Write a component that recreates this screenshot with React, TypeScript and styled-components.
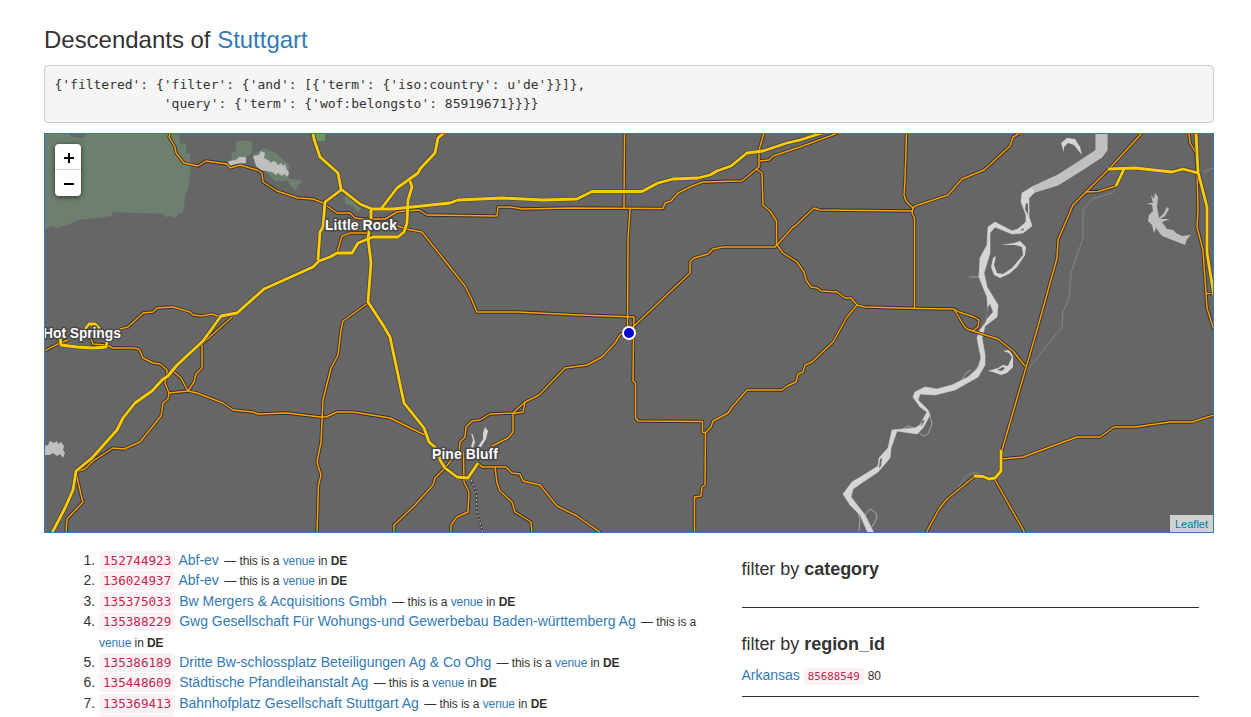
import React from 'react';
import styled, { createGlobalStyle } from 'styled-components';

const GlobalStyle = createGlobalStyle`
  * { box-sizing: border-box; }
  html, body { height: 100%; overflow: hidden; }
  body {
    margin: 0;
    background: #fff;
    color: #333;
    font-family: 'Liberation Sans', Arial, sans-serif;
    font-size: 14px;
    line-height: 20px;
  }
`;

const Page = styled.main`
  width: 1170px;
  margin: 0 0 0 44px;
  padding-top: 26px;
`;

const Title = styled.h3`
  margin: 0 0 12px;
  font-size: 24px;
  font-weight: 400;
  line-height: 27px;
  letter-spacing: -0.02px;
`;

const Link = styled.a`
  color: #337ab7;
  text-decoration: none;
`;

const Query = styled.pre`
  margin: 0 0 10px;
  padding: 9px 9.5px;
  height: 58px;
  border: 1px solid #ccc;
  border-radius: 4px;
  background: #f5f5f5;
  font: 13px/19px 'DejaVu Sans Mono', monospace;
  letter-spacing: -0.02px;
`;

const MapFrame = styled.section`
  position: relative;
  height: 400px;
  border: 1px solid #337ab7;
  background: #666;
  overflow: hidden;
`;

const MapArt = styled.svg`
  display: block;
  width: 1168px;
  height: 398px;
`;

const Label = styled.text`
  font: bold 14px 'Liberation Sans', Arial, sans-serif;
  fill: #fff;
  stroke: #484848;
  stroke-width: 3px;
  stroke-linejoin: round;
  paint-order: stroke;
`;

const ZoomControl = styled.div`
  position: absolute;
  top: 10px;
  left: 10px;
  width: 26px;
  border-radius: 4px;
  background: #fff;
  box-shadow: 0 1px 5px rgba(0, 0, 0, 0.65);
`;

const ZoomButton = styled.button`
  display: flex;
  align-items: center;
  justify-content: center;
  width: 26px;
  height: 26px;
  padding: 1px 0 0 1px;
  border: 0;
  background: none;
  color: #000;
  &:first-child { border-bottom: 1px solid #ccc; padding-top: 3px; }
`;

const Attribution = styled.div`
  position: absolute;
  right: 0;
  bottom: 0;
  padding: 0 5px;
  height: 17px;
  background: rgba(255, 255, 255, 0.7);
  color: #0078a8;
  font-size: 11px;
  line-height: 18px;
`;

const Columns = styled.div`
  display: grid;
  grid-template-columns: 682.5px 487.5px;
`;

const ResultsColumn = styled.div`
  padding: 17px 15px 0;
`;

const Results = styled.ol`
  margin: 0;
  padding-left: 40px;
`;

const Result = styled.li`
  line-height: 20.4px;
`;

const Code = styled.code<{ $small?: boolean }>`
  padding: 2px 4px;
  border-radius: 4px;
  background: #f9f2f4;
  color: #c7254e;
  font-family: 'DejaVu Sans Mono', monospace;
  font-size: ${(p) => (p.$small ? '10.8px' : '12.6px')};
  line-height: 1;
`;

const Note = styled.small<{ $count?: boolean }>`
  margin-left: ${(p) => (p.$count ? 0 : '1.5px')};
  font-size: 12px;
  letter-spacing: ${(p) => (p.$count ? 0 : '-0.08px')};
  line-height: 1;
`;

const Filters = styled.aside`
  padding: 0 15px;
`;

const Filter = styled.section<{ $height: number }>`
  height: ${(p) => p.$height}px;
  border-bottom: 1px solid #333;
`;

const FilterTitle = styled.h4`
  margin: 0;
  padding-top: 26px;
  font-size: 18px;
  font-weight: 400;
  line-height: 20px;
  letter-spacing: -0.03px;
`;

const FilterItem = styled.div`
  margin-top: 11px;
`;

const minorRoads = [
  'M170 133L169 137L175 147L176 153L184 163L198 166L206 161L227 164L230 168L240 165L257 170L262 173L263 182L277 191L298 198L313 199L323 203L337 213L350 213L355 218L362 219L385 219L397 212L406 211L419 210L427 215L497 216L498 207L510 207L523 209L570 208L663 208.5L665 203L671 201L678 193L692 186L703 182L742 181L759 167L759 150L764 133',
  'M760 161L769 160L773 156L800 147L838 133',
  'M756 169L762 173L763 205L770 211L776.5 221L776.5 245L775 247L723 247L713 249L708 254L694 258L690 262L690 273L634 326L620 335L615 343L602 357L587 365L565 368L539 395L525 402L513 413L490 414L480 420L472 421L466 427L465 437L460 442L459 452',
  'M525 402L523 412L513 413.5L513 432L508 438L492 446',
  'M777 245L793 227L795 226L814 208L820 210L913 211',
  'M906.5 133L905 180L904 195L906 201L913 208L912 213L914.5 218L914.5 308',
  'M913 208L915 206L948 195L962 179L984 170L1010 146L1013 137L1020 133',
  'M777 245L783 253L797 262L804 272L806 280L811 287L817 288L821 291L837 292L845 298L851 298L857 305L865 307L920 308.5L954 309L959 312L974 317L979 320L978 327L973 331L967 329L964 326L954 309',
  'M973 331L982 334L998 339L1013 351L1025 366',
  'M857 305L847 317L842 326L833 342L812 362L805 365L803 372L798 374L796 382L787 386L782 390L747 390L732 407L728 413L713 421L711 427L705.5 432.5L702.5 432.5L702.5 421.5L638 421L635.5 418L635.5 383L633 381L633.5 338L634 317L607 316L580 315L517 312L477 312L471 298L465 286L422 232L406 229L398 226',
  'M705.5 432L705 485L702 487L701 496L694.5 497L694.5 533',
  'M624.5 133L624 208', 'M630 209L628 240L627.5 327',
  'M1142 133L1110 168L1073 205L1058 240L1057 258L1037 330L1002 450',
  'M974 477L947 499L939 509L926 533', 'M995 480L1025 533',
  'M1002 459L1023 457L1077 437L1100 437L1114 427L1135 427L1170 422L1192 422L1214 415',
  'M1116 186L1098 191.5L1085 192',
  'M1189 133L1190 143L1196 153L1197 172L1198 210L1197 227L1203 250L1206 293L1207 308L1214 330',
  'M1206 293.5L1214 293.5', 'M337 253L342 236L350 233L368 233',
  'M368 303L343 321L341 330L338 355L331 368L323 400L321 442L317 462L321 475L318.5 485L317 533',
  'M120 329L128 327L143 313L153 312L157 308L173 307L190 312L193 315L202 316L212 314L220 317',
  'M232 317L223 325L202 344L202 368L196 374L194 382L188 391L169 393L165 383L167 375L167 370L160 364L153 363L143 358L139 349L133 348L113 348L107 345L93 344L90 337',
  'M173 371L181 378L188 391L197 393L223 403L233 410L253 412L258 414L287 413L320 417L326 417L337 412L353 412L390 418L427 436',
  'M169 393L168 399L163 403L161 416L140 442L124 449L113 448L93 461L85 469L76 472L81 495L83 502L67 519L66 533',
  'M44 351L60 343L68 340',
  'M453 458L445 468L435 478L433 485L415 505L394 525L394 533',
  'M463.5 452L464 482L469 492L468 512L457 517L451 525L451 533',
  'M478 463L482 467L506 467L512 473L520 474L523 481L540 485L557 506L577 516L601 533',
  'M495 467L497 483L500 491L512 502L515 512L531 522L532 533',
];

const highways = [
  'M313 133L314 139L320 157L338 173L341 189L360 204L372 209L393 209L450 203L458 200L503 198L543 200L577 199L592 191.5L642 191.5L658 183L673 179L698 178L710 175L717 171L731 166L747 153L763 151L787 143L800 140L822 133',
  'M444 133L438 138L435 153L420 169L418 173L397 188L381 209',
  'M410 181L412 187L408 200L407 223L404 232L398 237L373 237L358 243L352 253L337 253L330 257L319 261L313 267L264 289L237 313L221 316L211 330L203 341L177 365L168 376L162 380L152 391L135 403L123 418L117 430L92 458L76 471L73 490L65 508L52 533',
  'M341 190L325 202L323 227L320 232L318 260',
  'M371 210L371 218L368 238L371 263L368 302L383 325L390 337L404 403L424 428L429 442L438 450L440 460L445 468L457 477L468 478L478 463',
  'M1001 450L1001 471L995 478L989 479L983 476.5L974 476',
  'M1108 169L1135 168L1172 172L1183 169L1198 173', 'M1124 169L1116 186',
  'M1196 133L1198 172L1207 207L1207 253L1214 296',
  'M60 337L61 345L77 347L93 348L106 347L107 342', 'M85 329L89 324L95 324L100 329',
];

const river =
  'M1096 133L1096 150L1088 157L1058 175L1032 187L1022 193L1021 202L1026 215L1026 222L1018 229L1012 231L995 222L988 227L987 245L980 258L979 277L987 297L988 310L986 322L980 330L977 338L981 358L978 368L968 377L952 385L937 389L925 387L915 392L913 397L920 407L927 412L920 425L915 428L892 430L888 448L879 458L878 466L867 473L852 482L843 494L850 505L860 515L868 533L874 533L865 515L851 497L853 489L863 482L878 472L890 458L891 448L897 431L917 434L923 428L930 415L928 410L918 400L920 394L935 395L955 390L978 377L985 365L985 355L982 338L985 326L997 317L998 305L987 287L984 273L990 253L990 233L995 227L1012 234L1023 233L1032 226L1029 217L1029 198L1035 192L1058 185L1082 170L1102 157L1107 150L1107 133Z';

const reservoirs = [
  'M229 161L236 160L239 157L246 157L246 163L236 164L229 166L225 166Z',
  'M253 156L259 155L261 151L265 153L264 158L268 160L271 163L273 161L276 162L278 165L281 163L283 166L285 164L287 170L289 172L288 177L284 174L282 176L278 173L276 175L272 172L266 171L261 170L256 166Z',
  'M44 446L48 445L50 441L54 443L57 441L58 444L61 442L64 446L63 450L65 453L63 458L60 454L57 456L53 453L50 455L44 455Z',
  'M1150 203L1153 203L1151 195L1154 199L1155 193L1158 197L1157 207L1159 218L1164 213L1167 207L1169 209L1165 216L1160 219L1170 219L1162 222L1167 229L1173 230L1176 233L1182 236L1191 235L1187 239L1185 245L1175 241L1162 236L1156 228L1154 233L1152 225L1148 221L1149 215L1153 211L1152 205L1147 203Z',
];

const parks = [
  'M44 133L68 133L72 137L84 138L86 133L179 133L180 143L186 144L186 153L190 154L191 170L188 190L186 191L183 213L178 214L178 216L173 218L172 216L165 217L164 214L113 212L112 216L96 218L77 220L68 225L59 227L57 228L51 226L44 231Z',
  'M236 141L252 141L252 153L246 158L236 161L231 166L232 152L236 151Z',
  'M264 148L276 153L290 166L287 178L304 181L298 185L296 190L290 186L288 181L275 181L269 175L253 155Z',
  'M345 195L354 198L357 206L361 208L358 212L353 206L345 204Z',
];

const oxbows =
  'M1061 143L1067 138L1075 139L1080 147L1082 155L1074 145L1068 143L1064 147L1064 152ZM1001 245L1014 243L1020 241L1026 247L1025 255L1017 267L1009 274L1000 278L994 275L991 267L993 258L996 256L994 265L997 273L1003 274L1012 268L1023 255L1022 247L1015 245ZM988 371L998 368L1003 365L1008 366L1012 357L1009 353L1003 351L1009 350L1013 356L1013 367L1007 373L1001 375L993 372ZM471 433L473 435L475 442L473 448L471 447L473 440ZM485 427L488 431L486 439L481 447L477 448L483 439L483 433Z';

const MapView = () => (
  <MapArt viewBox="45 134 1168 398" strokeLinejoin="round" fill="none">
    <g fill="#6d806f">{parks.map((d) => <path key={d} d={d} />)}</g>
    <path fill="#6a9768" d="M315 133h10v8h-8z" />
    <g fill="#bfbfbf">{reservoirs.map((d) => <path key={d} d={d} />)}</g>
    <path fill="#d5d5d5" stroke="#d5d5d5" strokeWidth=".6" d={river} />
    <path fill="#d5d5d5" d={oxbows} />
    <path fill="#c0c0c0" stroke="#c0c0c0" strokeWidth=".6" d="M1096 133L1096 150L1058 175L1032 187L1035 192L1058 185L1082 170L1102 157L1107 150L1107 133Z" />
    <g fill="#666">
      <path d="M990 304L993 312L986 320L988 307Z" />
      <path d="M1026 203L1028 204L1028 215L1025 209Z" />
      <path d="M922 421L925 420L921 427Z" />
      <path d="M880 459L882 458L881 466L879 468Z" />
      <path d="M997 370L1003 367L1005 368L1002 371Z" />
      <path d="M1023 228L1020 231L1024 230Z" />
    </g>
    <g stroke="#b5b5b5" strokeWidth=".8">
      <path d="M929 412L932 424L928 434L924 436L919 433M962 379L966 373L971 370M967 378L975 371L979 365M858 513L860 520L859 531M865 515L870 509L876 513L877 518L872 527L868 528M969 277H979M903 429L908 426L914 428" />
    </g>
    <g stroke="#858585">
      <path d="M1115 190L1112 193L1092 199L1083 210L1083 238L1071 273L1069 298L1063 312L1062 327L1025 373" />
      <path d="M1203 172L1214 168M958 488L966 476L975 472L982 476" />
    </g>
    <path stroke="#3b3b3b" strokeWidth="2" d="M471 480L476 492L477 512L483 533" />
    <path stroke="#c8c8c8" strokeDasharray="2 2" d="M471 480L476 492L477 512L483 533" />
    <g stroke="#303030" strokeWidth="3.3">{minorRoads.map((d) => <path key={d} d={d} />)}</g>
    <g stroke="#ff9f00" strokeWidth="1.45">{minorRoads.map((d) => <path key={d} d={d} />)}</g>
    <g stroke="#404040" strokeWidth="4.2">{highways.map((d) => <path key={d} d={d} />)}</g>
    <g stroke="#fc0" strokeWidth="2.8">{highways.map((d) => <path key={d} d={d} />)}</g>
    <Label x="325" y="230" textLength="72">Little Rock</Label>
    <Label x="43" y="338" textLength="78">Hot Springs</Label>
    <Label x="432" y="459" textLength="66">Pine Bluff</Label>
    <circle cx="629" cy="333" r="6" fill="#0000d0" stroke="#fff" strokeWidth="2" />
  </MapArt>
);

const results = [
  { id: '152744923', name: 'Abf-ev' },
  { id: '136024937', name: 'Abf-ev' },
  { id: '135375033', name: 'Bw Mergers & Acquisitions Gmbh' },
  { id: '135388229', name: 'Gwg Gesellschaft Für Wohungs-und Gewerbebau Baden-württemberg Ag' },
  { id: '135386189', name: 'Dritte Bw-schlossplatz Beteiligungen Ag & Co Ohg' },
  { id: '135448609', name: 'Städtische Pfandleihanstalt Ag' },
  { id: '135369413', name: 'Bahnhofplatz Gesellschaft Stuttgart Ag' },
];

const query = `{'filtered': {'filter': {'and': [{'term': {'iso:country': u'de'}}]},
              'query': {'term': {'wof:belongsto': 85919671}}}}`;

const NextCodeEdge = styled.div`
  width: 76px;
  height: 18px;
  margin: 1px 0 0 40px;
  border-radius: 4px;
  background: #f9f2f4;
`;

export default function App() {
  return (
    <>
      <GlobalStyle />
      <Page>
        <Title>Descendants of <Link>Stuttgart</Link></Title>
        <Query>{query}</Query>
        <MapFrame>
          <MapView />
          <ZoomControl>
            <ZoomButton aria-label="Zoom in">
              <svg width="10" height="10" stroke="currentColor" strokeWidth="2"><path d="M0 5H10M5 0V10" /></svg>
            </ZoomButton>
            <ZoomButton aria-label="Zoom out">
              <svg width="10" height="10" stroke="currentColor" strokeWidth="2"><path d="M0 5H10" /></svg>
            </ZoomButton>
          </ZoomControl>
          <Attribution>Leaflet</Attribution>
        </MapFrame>
        <Columns>
          <ResultsColumn>
            <Results>
              {results.map((r) => (
                <Result key={r.id}>
                  <Code>{r.id}</Code> <Link>{r.name}</Link>{' '}
                  <Note>— this is a <Link>venue</Link> in <strong>DE</strong></Note>
                </Result>
              ))}
            </Results>
            <NextCodeEdge />
          </ResultsColumn>
          <Filters>
            <Filter $height={75}>
              <FilterTitle>filter by <strong>category</strong></FilterTitle>
            </Filter>
            <Filter $height={89}>
              <FilterTitle>filter by <strong>region_id</strong></FilterTitle>
              <FilterItem>
                <Link>Arkansas</Link> <Code $small>85688549</Code> <Note $count>80</Note>
              </FilterItem>
            </Filter>
          </Filters>
        </Columns>
      </Page>
    </>
  );
}
